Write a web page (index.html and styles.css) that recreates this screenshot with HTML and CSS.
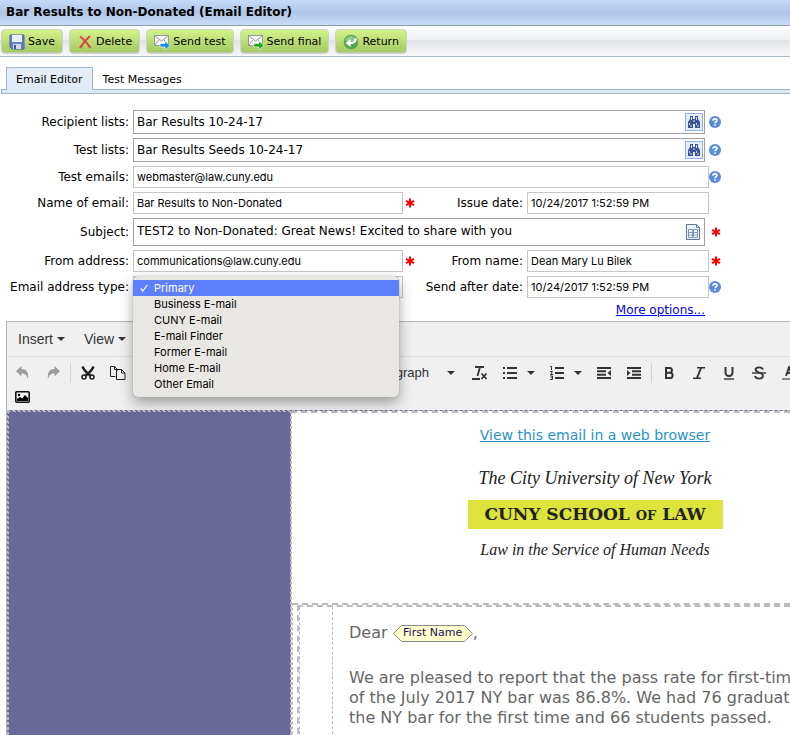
FILE: index.html
```html
<!DOCTYPE html>
<html lang="en">
<head>
<meta charset="utf-8">
<title>Bar Results to Non-Donated (Email Editor)</title>
<link rel="stylesheet" href="styles.css">
</head>
<body>
<svg class="defs" aria-hidden="true">
  <symbol id="binoculars" viewBox="0 0 14 14">
    <path d="M3 1h3v3h2V1h3v3l2 3v6H8V9H6v4H1V7l2-3z" fill="#3d5590"/>
    <path d="M4 2h1v3H4zM9 2h1v3H9zM2 8h1v2H2zM9 8h1v2H9z" fill="#c6d9f5"/>
    <path d="M6 5h2v2H6zM3 10h2v2H3zM10 10h2v2h-2z" fill="#7f9ad0"/>
  </symbol>
  <symbol id="help" viewBox="0 0 12 12">
    <circle cx="6" cy="6" r="6" fill="#5a8cdb"/>
    <path d="M4 4.700C4 2.300 8 2.300 8 4.500C8 5.800 6 5.700 6 7.200" fill="none" stroke="#fff" stroke-width="1.600"/>
    <rect x="5.200" y="8.200" width="1.600" height="1.600" fill="#fff"/>
  </symbol>
  <symbol id="required" viewBox="0 0 10 10">
    <path d="M5 0.500v9M1 2.800l8 4.400M9 2.800L1 7.200" stroke="#f00" stroke-width="2"/>
  </symbol>
  <symbol id="caret" viewBox="0 0 8 4"><path d="M0 0h8L4 4z" fill="#333"/></symbol>
  <symbol id="envelope" viewBox="0 0 16 16">
    <rect x="0.500" y="1.500" width="14" height="10" fill="#f8f8f8" stroke="#999"/>
    <path d="M1 2l6.500 5L14 2M1 11l4-5M14 11l-4-5" fill="none" stroke="#999"/>
  </symbol>
</svg>

<header class="titlebar"><h1>Bar Results to Non-Donated (Email Editor)</h1></header>

<div class="actions">
  <button type="button" class="action">
    <svg width="16" height="16" viewBox="0 0 16 16"><path d="M1 1h14v14H3l-2-2z" fill="#5f7fc8" stroke="#4564a8"/><rect x="3" y="1" width="10" height="7" fill="#e9eefb"/><rect x="4" y="10" width="8" height="5" fill="#d5d8e2"/><rect x="5" y="11" width="2" height="4" fill="#3f5c9f"/></svg>Save</button>
  <button type="button" class="action">
    <svg width="16" height="16" viewBox="0 0 16 16"><path d="M3 2.500Q8 6 13.500 14M13 2Q7 7 3 14" fill="none" stroke="#dc3f3f" stroke-width="2"/></svg>Delete</button>
  <button type="button" class="action">
    <svg width="16" height="16" viewBox="0 0 16 16"><use href="#envelope"/><path d="M6 9.500h5V7l5 4.500-5 4.500v-3H6z" fill="#1e8fe8" stroke="#fff" stroke-width=".6"/></svg>Send test</button>
  <button type="button" class="action">
    <svg width="16" height="16" viewBox="0 0 16 16"><use href="#envelope"/><path d="M6 9.500h5V7l5 4.500-5 4.500v-3H6z" fill="#1fa51f" stroke="#fff" stroke-width=".6"/></svg>Send final</button>
  <button type="button" class="action">
    <svg width="16" height="16" viewBox="0 0 16 16"><circle cx="8" cy="8" r="7.300" fill="#55a653"/><path d="M2 5Q8-1 14 5L13 7H3z" fill="#8dcc87"/><path d="M12.500 4.500Q13 9 7 9" fill="none" stroke="#fff" stroke-width="2.400"/><path d="M7.500 5v8L2.500 9z" fill="#fff"/></svg>Return</button>
</div>

<nav class="tabs">
  <a class="tab tab-active" href="#editor">Email Editor</a>
  <a class="tab" href="#tests">Test Messages</a>
</nav>
<div class="tabline"></div>

<form class="form">
  <label for="recipients">Recipient lists:</label>
  <div class="wide"><div class="box"><input id="recipients" value="Bar Results 10-24-17"><button type="button" class="find" aria-label="Find"><svg width="14" height="14"><use href="#binoculars"/></svg></button></div></div>
  <svg class="mark" width="12" height="12"><use href="#help"/></svg>

  <label for="testlists">Test lists:</label>
  <div class="wide"><div class="box"><input id="testlists" value="Bar Results Seeds 10-24-17"><button type="button" class="find" aria-label="Find"><svg width="14" height="14"><use href="#binoculars"/></svg></button></div></div>
  <svg class="mark" width="12" height="12"><use href="#help"/></svg>

  <label for="testemails">Test emails:</label>
  <div class="wide"><input class="small" id="testemails" value="webmaster@law.cuny.edu"></div>
  <svg class="mark" width="12" height="12"><use href="#help"/></svg>

  <label for="name">Name of email:</label>
  <input class="small" id="name" value="Bar Results to Non-Donated">
  <svg class="star" width="10" height="10"><use href="#required"/></svg>
  <label for="issue">Issue date:</label>
  <input class="small" id="issue" value="10/24/2017 1:52:59 PM">
  <span></span>

  <label for="subject">Subject:</label>
  <div class="wide"><div class="box box-tall"><input id="subject" value="TEST2 to Non-Donated: Great News! Excited to share with you"><button type="button" class="merge" aria-label="Insert field"><svg width="14" height="16" viewBox="0 0 14 16"><path d="M.5.500h10l3 3v12H.5z" fill="#eaf1fb" stroke="#62789c"/><path d="M10.500.500v3h3" fill="none" stroke="#62789c"/><path d="M2.500 5.500h4v8h-4zM7.500 5.500h4v8h-4zM2.500 8.500h9M2.500 11h9" fill="#fff" stroke="#7f96ba"/></svg></button></div></div>
  <svg class="star" width="10" height="10"><use href="#required"/></svg>

  <label for="from">From address:</label>
  <input class="small" id="from" value="communications@law.cuny.edu">
  <svg class="star" width="10" height="10"><use href="#required"/></svg>
  <label for="fromname">From name:</label>
  <input class="small" id="fromname" value="Dean Mary Lu Bilek">
  <svg class="star" width="10" height="10"><use href="#required"/></svg>

  <label for="type">Email address type:</label>
  <div class="picker">
    <select class="small" id="type"><option>Primary</option><option>Business E-mail</option><option>CUNY E-mail</option><option>E-mail Finder</option><option>Former E-mail</option><option>Home E-mail</option><option>Other Email</option></select>
    <ul class="menu">
      <li class="chosen"><svg width="8" height="8" viewBox="0 0 8 8"><path d="M.7 4.500l2.100 2.500L7.300 1" fill="none" stroke="#fff" stroke-width="1.200"/></svg>Primary</li>
      <li>Business E-mail</li>
      <li>CUNY E-mail</li>
      <li>E-mail Finder</li>
      <li>Former E-mail</li>
      <li>Home E-mail</li>
      <li>Other Email</li>
    </ul>
  </div>
  <span></span>
  <label for="after">Send after date:</label>
  <input class="small" id="after" value="10/24/2017 1:52:59 PM">
  <svg class="mark" width="12" height="12"><use href="#help"/></svg>
</form>
<div class="more"><a href="#more">More options...</a></div>

<main class="editor" id="editor">
  <div class="menubar">
    <button type="button">Insert<svg width="8" height="4"><use href="#caret"/></svg></button>
    <button type="button">View<svg width="8" height="4"><use href="#caret"/></svg></button>
  </div>
  <div class="toolbar">
    <div class="tools">
      <button type="button" class="tool" aria-label="Undo"><svg width="14" height="14" viewBox="0 0 14 14"><path d="M5.500 0v3C10 3 13 6 12 13 11 9 9 7.500 5.500 7.500v3L0 5.200z" fill="#9c9c9c"/></svg></button>
      <button type="button" class="tool" aria-label="Redo"><svg width="14" height="14" viewBox="0 0 14 14"><path d="M8.500 0v3C4 3 1 6 2 13 3 9 5 7.500 8.500 7.500v3L14 5.200z" fill="#9c9c9c"/></svg></button>
      <span class="sep"></span>
      <button type="button" class="tool" aria-label="Cut"><svg width="14" height="14" viewBox="0 0 14 14"><path d="M1.500 0.500Q3 5 10 10M12.500 0.500Q11 5 4 10" fill="none" stroke="#222" stroke-width="2.400"/><circle cx="3" cy="11" r="2" fill="none" stroke="#222" stroke-width="1.600"/><circle cx="11" cy="11" r="2" fill="none" stroke="#222" stroke-width="1.600"/></svg></button>
      <button type="button" class="tool" aria-label="Copy"><svg width="16" height="14" viewBox="0 0 16 14"><path d="M5.500 10.500h-5V.5h4l3 3v1M4.500.500v3h3M6.500 3.500h5l3.500 3.500v6.500H6.500zM11.500 3.500V7H15" fill="none" stroke="#222"/></svg></button>
      <button type="button" class="tool format">Paragraph<svg width="8" height="4"><use href="#caret"/></svg></button>
      <button type="button" class="tool" aria-label="Clear formatting"><svg width="16" height="14" viewBox="0 0 16 14"><path d="M3 1h9M8 1L5.500 10M0 13h8M9.500 7.500l5 5.500M14.500 7.500l-5 5.500" fill="none" stroke="#333" stroke-width="1.800"/></svg></button>
      <button type="button" class="tool split" aria-label="Bullet list"><svg width="14" height="14" viewBox="0 0 14 14"><path d="M4 2h10M4 7h10M4 12h10M0 2h2M0 7h2M0 12h2" stroke="#333" stroke-width="2"/></svg><svg width="8" height="4"><use href="#caret"/></svg></button>
      <button type="button" class="tool split" aria-label="Numbered list"><svg width="14" height="14" viewBox="0 0 14 14"><path d="M5 2h9M5 7h9M5 12h9" stroke="#333" stroke-width="2"/><path d="M0 .5h1.500V4M0 5.500h2.500L.5 8.500h2.500M0 10h2.500v3.500H0M1 11.700h1.500" fill="none" stroke="#333"/></svg><svg width="8" height="4"><use href="#caret"/></svg></button>
      <button type="button" class="tool" aria-label="Outdent"><svg width="14" height="12" viewBox="0 0 14 12"><path d="M0 1h14M0 11h14M0 4.300h9M0 7.700h9" stroke="#333" stroke-width="2"/><path d="M14 3v6l-3.500-3z" fill="#333"/></svg></button>
      <button type="button" class="tool" aria-label="Indent"><svg width="14" height="12" viewBox="0 0 14 12"><path d="M0 1h14M0 11h14M5 4.300h9M5 7.700h9" stroke="#333" stroke-width="2"/><path d="M0 3v6l3.500-3z" fill="#333"/></svg></button>
      <span class="sep"></span>
      <button type="button" class="tool" aria-label="Bold"><svg width="10" height="12" viewBox="0 0 10 12"><path d="M2 1h3.500a2.400 2.400 0 0 1 0 4.800H2zM2 5.800h4a2.600 2.600 0 0 1 0 5.200H2z" fill="none" stroke="#333" stroke-width="2"/></svg></button>
      <button type="button" class="tool" aria-label="Italic"><svg width="12" height="12" viewBox="0 0 12 12"><path d="M4 .8h8M0 11.200h8" stroke="#333" stroke-width="1.500"/><path d="M8 1L4 11" stroke="#333" stroke-width="2"/></svg></button>
      <button type="button" class="tool" aria-label="Underline"><svg width="10" height="14" viewBox="0 0 10 14"><path d="M1.500 1v5.500a3.500 3.500 0 0 0 7 0V1" fill="none" stroke="#333" stroke-width="2"/><path d="M0 13h10" stroke="#333" stroke-width="1.400"/></svg></button>
      <button type="button" class="tool" aria-label="Strikethrough"><svg width="14" height="14" viewBox="0 0 14 14"><path d="M11 3.500C10 .5 3.500.5 3.500 3.800c0 3 7.500 2.400 7.500 6C11 13.500 4 13.500 3 10" fill="none" stroke="#333" stroke-width="1.800"/><path d="M0 7h14" stroke="#333" stroke-width="1.400"/></svg></button>
      <button type="button" class="tool" aria-label="Text color"><svg width="14" height="14" viewBox="0 0 14 14"><path d="M4 10L7 1l3 9M5 7h4" fill="none" stroke="#333" stroke-width="1.800"/><path d="M0 13h14" stroke="#888" stroke-width="2"/></svg></button>
    </div>
    <div class="tools tools-second">
      <button type="button" class="tool" aria-label="Image"><svg width="16" height="12" viewBox="0 0 16 12"><rect x=".8" y=".8" width="13.400" height="10.400" rx="1" fill="none" stroke="#111" stroke-width="1.600"/><circle cx="4" cy="4" r="1.200"/><path d="M2 10V8l3-2 2 1.500L10 4l3 3v3z"/></svg></button>
    </div>
  </div>
  <div class="canvas">
    <div class="side"></div>
    <div class="mail">
      <div class="masthead">
        <a href="#browser">View this email in a web browser</a>
        <div class="logo">
          <p class="script">The City University of New York</p>
          <p class="band">CUNY SCHOOL <small>OF</small> LAW</p>
          <p class="script motto">Law in the Service of Human Needs</p>
        </div>
      </div>
      <div class="bodytable">
        <div class="inner">
          <div class="gutter"></div>
          <div class="letter">
            <p>Dear <span class="field"><svg width="80" height="17" viewBox="0 0 80 17"><path d="M8.500.500h63l8 8-8 8h-63l-8-8z" fill="#ffffcc" stroke="#888"/></svg><span>First Name</span></span>,</p>
            <p>We are pleased to report that the pass rate for first-time<br>of the July 2017 NY bar was 86.8%. We had 76 graduates<br>the NY bar for the first time and 66 students passed.</p>
          </div>
        </div>
      </div>
    </div>
  </div>
</main>
</body>
</html>
```
FILE: styles.css
```css
* { box-sizing: border-box; }
body {
  display: flex;
  flex-direction: column;
  margin: 0;
  height: 100vh;
  overflow: hidden;
  background: #fff;
  color: #000;
  font: 12px/16px "DejaVu Sans", Verdana, sans-serif;
}
p, h1, ul { margin: 0; padding: 0; }
button, input, select { font: inherit; color: inherit; }
.defs { position: absolute; width: 0; height: 0; }

.titlebar {
  height: 26px;
  padding: 4px 6px;
  background: linear-gradient(#c4dbf9, #afc5e6 50%, #c9dcf6);
  border-bottom: 1px solid #8d9bab;
}
h1 { font-size: 12px; line-height: 16px; }

.actions {
  display: flex;
  gap: 6px;
  padding: 3px 1px 2px;
  background: linear-gradient(#fff, #eceef1 45%, #dee2e7 46%, #f8f8f9);
  border-bottom: 1px solid #a9b9c9;
}
.action {
  display: flex;
  align-items: center;
  gap: 3px;
  height: 25px;
  padding: 1px 7px 0;
  border: 1px solid #cdd2c8;
  border-radius: 4px;
  box-shadow: inset 0 -1px #c3cbb8;
  background: linear-gradient(#d3f28a, #a4c75f);
  font-size: 11px;
}

.tabs { display: flex; margin: 10px 6px 0; }
.tab {
  height: 22px;
  padding: 4px 9px 0;
  border: 1px solid transparent;
  border-bottom: 0;
  color: #000;
  font-size: 11px;
  line-height: 16px;
  text-decoration: none;
}
.tab-active {
  position: relative;
  margin-bottom: -1px;
  height: 23px;
  border-color: #a3b5cb;
  background: linear-gradient(#e8eef8, #dfe9f6);
}
.tabline {
  height: 5px;
  margin-left: 1px;
  border: 1px solid #a3b5cb;
  border-right: 0;
  background: #dfe9f6;
}

.form {
  display: grid;
  grid-template-columns: 129px 270px 10px 102px 182px 16px;
  column-gap: 4px;
  row-gap: 4px;
  align-items: center;
  padding-top: 16px;
}
.form label { text-align: right; }
.wide { grid-column: 2 / 6; }
.small {
  display: block;
  width: 100%;
  height: 22px;
  padding: 0 3px;
  border: 1px solid #c6c6c6;
  border-radius: 0;
  background: #fff;
  font: 11px/16px Inter, sans-serif;
}
.box {
  display: flex;
  align-items: center;
  height: 24px;
  margin-right: 4px;
  border: 1px solid #a0a0a0;
}
.box-tall { height: 28px; }
.box input { flex: 1; min-width: 0; border: 0; padding: 0 3px; background: none; }
.box-tall input { padding-bottom: 3px; }
.box button { display: flex; align-items: center; justify-content: center; padding: 0; background: none; border: 0; }
.box .find {
  width: 18px;
  height: 18px;
  margin-right: 1px;
  border: 1px solid #91b1e3;
  background: #e4ecf8;
}
.box .merge { margin-right: 4px; }
.mark { margin-left: -4px; }
.star { margin-left: -2px; }

.picker { position: relative; }
.menu {
  position: absolute;
  z-index: 2;
  top: 0;
  left: 0;
  width: 266px;
  padding: 4px 0 5px;
  border-radius: 5px;
  background: #e9e7e3;
  box-shadow: 0 0 1px #777, 0 6px 14px rgba(0, 0, 0, .35);
  list-style: none;
  font: 11px/16px Inter, sans-serif;
}
.menu li { padding-left: 21px; }
.menu .chosen { display: flex; align-items: center; gap: 6px; padding-left: 7px; background: #5c80fc; color: #fff; }

.more { width: 705px; padding-top: 4px; height: 23px; text-align: right; }
.more a { color: #0000e8; }

.editor {
  display: flex;
  flex-direction: column;
  flex: 1;
  min-height: 0;
  margin-left: 6px;
  overflow: hidden;
  border: 1px solid #b5b5b5;
  border-width: 1px 0 0 1px;
}
.editor button { display: flex; align-items: center; padding: 0; border: 0; background: none; color: #333; }
.menubar {
  display: flex;
  flex: none;
  gap: 19px;
  height: 35px;
  padding-left: 11px;
  border-bottom: 1px solid #dfdfdf;
  background: #f0f0f0;
}
.menubar button { gap: 4px; font: 14px/20px "Liberation Sans", Arial, sans-serif; }
.toolbar { flex: none; height: 53px; background: #f0f0f0; }
.tools { display: flex; align-items: center; height: 32px; padding-left: 1px; }
.tools-second { height: 16px; }
.editor .tool { flex: none; justify-content: center; width: 30px; }
.sep { flex: none; width: 1px; height: 20px; margin: 0 2px; background: #d3d3d3; }
.editor .format { width: 332px; justify-content: flex-end; gap: 18px; padding-right: 10px; font: 13px/20px "Liberation Sans", Arial, sans-serif; }
.editor .split { width: 47px; gap: 10px; }

.canvas {
  display: flex;
  flex: 1;
  min-height: 0;
  border: 1px dashed #bbb;
  border-width: 1px 0 0 1px;
  background: #696999;
}
.side { flex: none; width: 283px; border: 1px dashed #bbb; border-bottom: 0; }
.mail {
  flex: 1;
  min-width: 0;
  overflow: hidden;
  border: 2px dashed #bbb;
  border-width: 2px 0 0 1px;
  background: #fff;
}
.masthead { width: 606px; height: 189px; padding-top: 12px; text-align: center; }
.masthead a { color: #2a93c8; font-size: 14px; line-height: 20px; }
.logo { padding-top: 21px; }
.script { font: italic 18px/24px "Liberation Serif", serif; color: #222; }
.band {
  width: 255px;
  height: 29px;
  margin: 10px auto 9px;
  background: #dde33a;
  color: #222;
  font: bold 17px/29px "DejaVu Serif", serif;
}
.band small { font-size: 13px; }
.motto { font-size: 16px; }
.bodytable { margin-top: 1px; border: 2px dashed #bbb; border-width: 2px 0 0 1px; }
.inner { display: flex; margin-left: 4px; border: 2px dashed #bbb; border-width: 2px 0 0 2px; }
.gutter { flex: none; width: 34px; border: 1px dashed #bbb; border-width: 0 1px; }
.letter { flex: 1; padding: 16px; color: #666; font-size: 16px; line-height: 20px; white-space: nowrap; }
.letter p + p { margin-top: 25px; }
.field { position: relative; display: inline-flex; vertical-align: middle; }
.field span { position: absolute; inset: 0; color: #1d1060; font-size: 11px; line-height: 16px; text-align: center; }
```
